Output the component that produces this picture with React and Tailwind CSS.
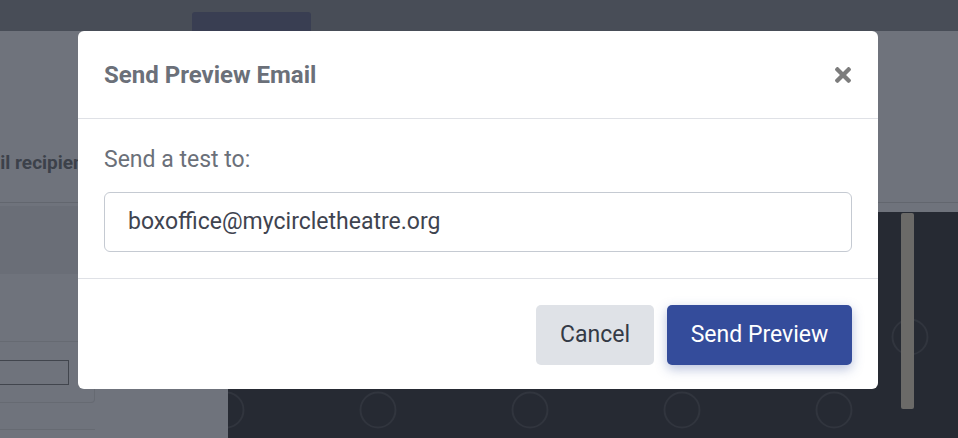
import React from "react";

function SeatMap() {
  const circles = [
    [226, 410],
    [378, 410],
    [530, 410],
    [682, 410],
    [834, 410],
    [910, 337],
  ];
  return (
    <svg className="absolute left-[228px] top-[212px]" width="730" height="226" viewBox="228 212 730 226">
      {circles.map(([cx, cy], i) => (
        <circle key={i} cx={cx} cy={cy} r="17.5" fill="none" stroke="#31353e" strokeWidth="2" />
      ))}
      <rect x="901" y="213" width="13" height="196" rx="2" fill="#6b6a68" />
    </svg>
  );
}

export default function App() {
  return (
    <div className="relative w-[958px] h-[438px] overflow-hidden font-['Roboto',sans-serif] bg-[#6f737c]">
      {/* top bar */}
      <div className="h-[31px] bg-[#484d57] flex items-end">
        <div className="ml-[192px] w-[119px] h-[19px] rounded-t-[3px] bg-[#393e52]" />
      </div>
      {/* body */}
      <div className="flex h-[407px]">
        {/* left column */}
        <div className="w-[228px] flex flex-col overflow-hidden">
          <div className="h-[171px] flex flex-col">
            <div className="mt-[118px] text-[19px] font-bold text-[#3c414a] whitespace-nowrap -ml-[37px]">
              Email recipients
            </div>
          </div>
          <div className="h-[1px] bg-[#62666e]" />
          <div className="h-[68px] mt-[3px] bg-[#6a6e77]" />
          <div className="h-[67px]" />
          <div className="w-[95px] h-[62px] border-t border-r border-b border-[#666a72] rounded-br-[4px] flex flex-col">
            <div className="mt-[18px] w-[69px] h-[25px] border border-l-0 border-[#41454d]" />
          </div>
          <div className="mt-[26px] w-[95px] h-[1px] bg-[#666a72]" />
        </div>
        {/* right area */}
        <div className="flex-1 flex flex-col">
          <div className="h-[171px]" />
          <div className="h-[1px] bg-[#62666e]" />
          <div className="h-[9px]" />
          <div className="flex-1 bg-[#262a33]" />
        </div>
      </div>
      <SeatMap />

      {/* modal */}
      <div className="absolute left-[78px] top-[31px] w-[800px] bg-white rounded-[6px]">
        <div className="h-[88px] px-[26px] flex items-center justify-between border-b border-[#dfe1e6]">
          <h2 className="text-[24px] font-bold text-[#6b7079]">Send Preview Email</h2>
          <svg width="16" height="16" viewBox="0 80 352 352" className="mr-[1px]">
            <path
              fill="#7c7c7c"
              d="M242.72 256l100.07-100.07c12.28-12.28 12.28-32.19 0-44.48l-22.24-22.24c-12.28-12.28-32.19-12.28-44.48 0L176 189.28 75.930 89.21c-12.28-12.28-32.19-12.28-44.48 0L9.21 111.45c-12.28 12.28-12.28 32.19 0 44.48L109.28 256 9.21 356.07c-12.28 12.28-12.28 32.19 0 44.48l22.24 22.24c12.28 12.28 32.2 12.28 44.48 0L176 322.72l100.07 100.07c12.28 12.28 32.2 12.28 44.48 0l22.24-22.24c12.28-12.28 12.28-32.19 0-44.48L242.72 256z"
            />
          </svg>
        </div>
        <div className="px-[26px] pt-[27px] pb-[26px] border-b border-[#dfe1e6]">
          <div className="text-[23px] leading-[28px] text-[#6b7079]">Send a test to:</div>
          <div className="mt-[18px] h-[60px] border border-[#c5cad2] rounded-[6px] flex items-center px-[23px] text-[23px] text-[#3f4450]">
            boxoffice@mycircletheatre.org
          </div>
        </div>
        <div className="px-[26px] pt-[26px] pb-[24px] flex justify-end gap-[13px]">
          <button className="w-[118px] h-[60px] rounded-[5px] bg-[#dfe2e7] text-[23px] text-[#343a46]">
            Cancel
          </button>
          <button className="w-[185px] h-[60px] rounded-[5px] bg-[#344c9b] text-[23px] text-white shadow-[0_4px_12px_rgba(52,76,155,0.35)]">
            Send Preview
          </button>
        </div>
      </div>
    </div>
  );
}
